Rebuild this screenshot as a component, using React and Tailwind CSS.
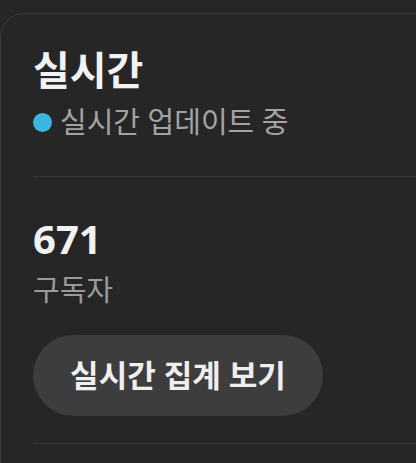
export default function App() {
  return (
    <div
      className="h-[463px] w-[416px] overflow-hidden bg-[#262626] pt-[13px]"
      style={{ fontFamily: '"Noto Sans", "Noto Sans CJK KR", sans-serif' }}
    >
      <div className="h-[520px] w-[470px] rounded-tl-[24px] border border-[#3a3a3a] pl-8 pt-8">
        <h1 className="text-[40px] font-bold leading-[48px] text-[#f2f2f2]">실시간</h1>
        <div className="mt-3 flex h-8 items-center gap-2">
          <span className="h-[19px] w-[19px] rounded-full bg-[#3bb6e3]" />
          <span className="text-[29px] leading-8 text-[#a3a3a3]">실시간 업데이트 중</span>
        </div>

        <div className="mt-[38px] h-px bg-[#383838]" />

        <div className="mt-[38px] text-[40px] font-bold leading-[48px] text-[#f2f2f2]">671</div>
        <div className="mt-[9px] text-[29px] leading-9 text-[#9a9a9a]">구독자</div>

        <button className="mt-[27px] flex h-[81px] w-[290px] items-center justify-center rounded-full bg-[#3d3d3d] text-[31px] font-bold text-[#efefef]">
          실시간 집계 보기
        </button>

        <div className="mt-[27px] h-px bg-[#383838]" />
      </div>
    </div>
  );
}
